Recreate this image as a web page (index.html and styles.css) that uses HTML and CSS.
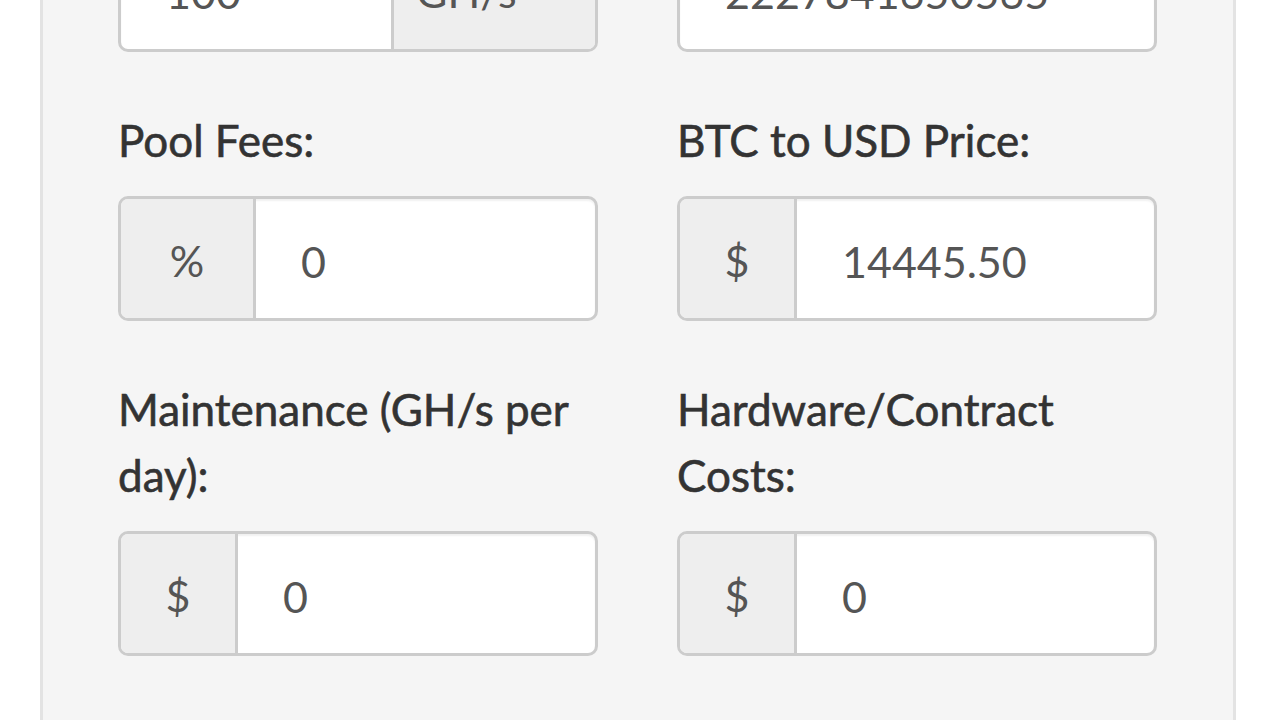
FILE: index.html
```html
<!DOCTYPE html>
<html lang="en">
<head>
<meta charset="utf-8">
<title>Mining Calculator</title>
<link rel="stylesheet" href="styles.css">
</head>
<body>
<div class="well">
  <div class="grid">
    <div class="group">
      <label class="lbl">Hash Rate:</label>
      <div class="ig">
        <input class="field" type="text" value="100">
        <span class="addon addon-unit">GH/s</span>
      </div>
    </div>
    <div class="group">
      <label class="lbl">Difficulty:</label>
      <div class="ig">
        <input class="field" type="text" value="2227841650565">
      </div>
    </div>
    <div class="group">
      <label class="lbl">Pool Fees:</label>
      <div class="ig">
        <span class="addon addon-pct">%</span>
        <input class="field" type="text" value="0">
      </div>
    </div>
    <div class="group">
      <label class="lbl">BTC to USD Price:</label>
      <div class="ig">
        <span class="addon addon-usd">$</span>
        <input class="field" type="text" value="14445.50">
      </div>
    </div>
    <div class="group">
      <label class="lbl">Maintenance (GH/s per day):</label>
      <div class="ig">
        <span class="addon addon-usd">$</span>
        <input class="field" type="text" value="0">
      </div>
    </div>
    <div class="group">
      <label class="lbl">Hardware/Contract Costs:</label>
      <div class="ig">
        <span class="addon addon-usd">$</span>
        <input class="field" type="text" value="0">
      </div>
    </div>
    <div class="group">
      <label class="lbl">Power Consumption:</label>
      <div class="ig">
        <input class="field" type="text" value="0">
      </div>
    </div>
    <div class="group">
      <label class="lbl">Cost per KWh:</label>
      <div class="ig">
        <input class="field" type="text" value="0">
      </div>
    </div>
  </div>
</div>
</body>
</html>
```
FILE: styles.css
```css
html, body {
  margin: 0;
  padding: 0;
  background: #ffffff;
}

body {
  font-family: Lato, "Liberation Sans", sans-serif;
  overflow: hidden;
}

.well {
  box-sizing: border-box;
  width: 1196px;
  margin: -182px 0 0 40px;
  padding: 20px 76px 40px 75px;
  background: #f5f5f5;
  border-left: 3px solid #e3e3e3;
  border-right: 3px solid #e3e3e3;
}

.grid {
  display: grid;
  grid-template-columns: 480px 480px;
  column-gap: 79px;
}

.group {
  margin-bottom: 55px;
}

.lbl {
  display: block;
  font-size: 44px;
  line-height: 66px;
  font-weight: 400;
  color: #333333;
  margin-bottom: 23px;
  -webkit-text-stroke: 0.6px #333333;
}

.ig {
  box-sizing: border-box;
  display: flex;
  height: 125px;
  border: 3px solid #cccccc;
  border-radius: 10px;
  overflow: hidden;
  background: #ffffff;
  box-shadow: inset 0 2px 2px rgba(0, 0, 0, 0.06);
}

.field {
  flex: 1;
  min-width: 0;
  box-sizing: border-box;
  height: 100%;
  margin: 0;
  border: 0;
  outline: none;
  background: transparent;
  padding: 6px 0 0 45px;
  font-family: Lato, "Liberation Sans", sans-serif;
  font-size: 43px;
  color: #555555;
}

.addon {
  box-sizing: border-box;
  display: flex;
  align-items: center;
  justify-content: center;
  padding-top: 4px;
  background: #eeeeee;
  font-size: 43px;
  color: #555555;
  flex: none;
}

.addon-pct {
  width: 135px;
  border-right: 3px solid #cccccc;
}

.addon-usd {
  width: 117px;
  border-right: 3px solid #cccccc;
}

.addon-unit {
  width: 204px;
  justify-content: flex-start;
  padding-left: 22px;
  border-left: 3px solid #cccccc;
}
```
